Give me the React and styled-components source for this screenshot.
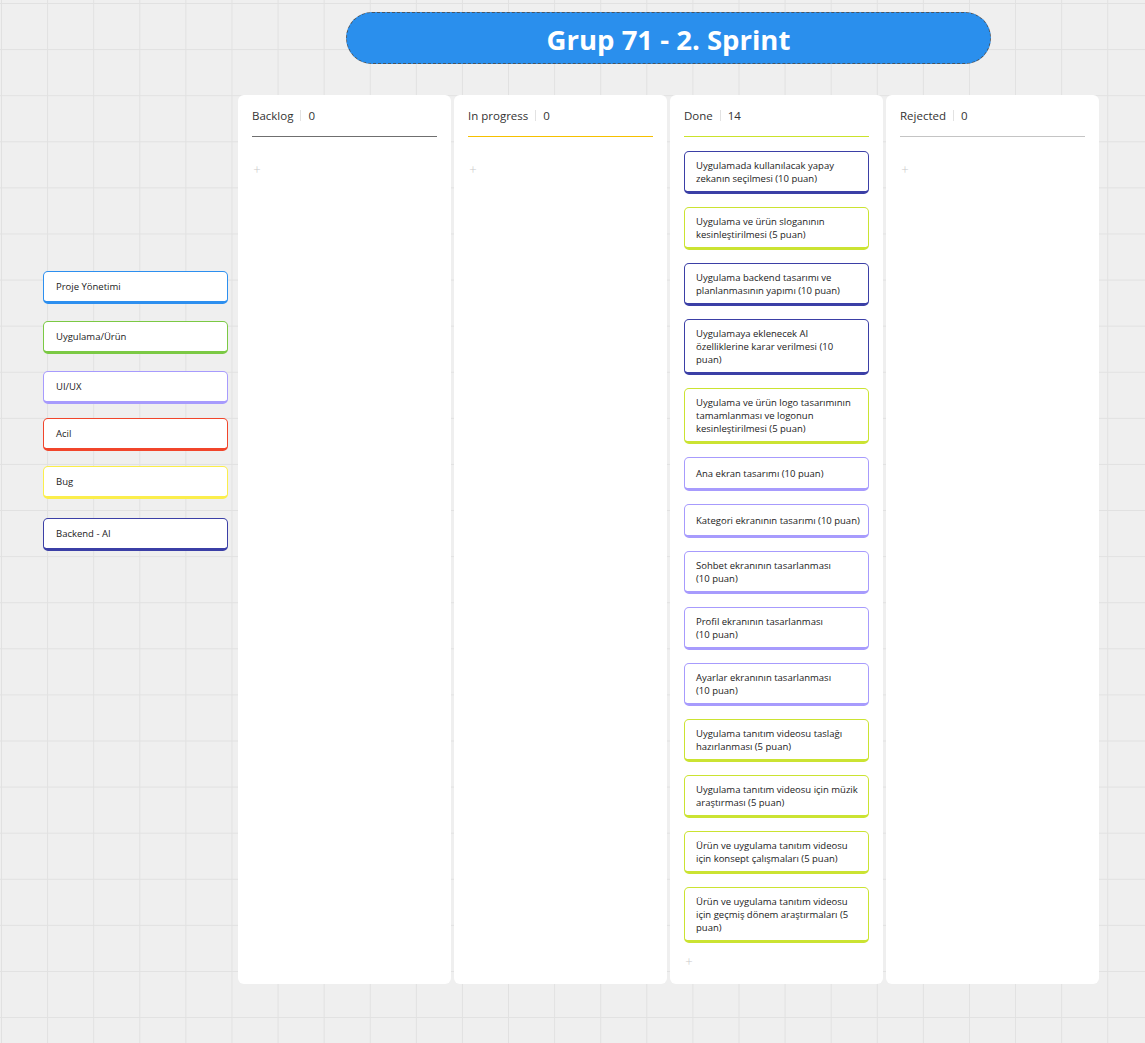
import React from "react";
import styled, { createGlobalStyle } from "styled-components";

const GlobalStyle = createGlobalStyle`
  html, body { margin: 0; padding: 0; }
  body {
    font-family: "Open Sans", "Noto Sans", "Liberation Sans", sans-serif;
    background: #efefef;
  }
`;

const COLORS = {
  blue: "#2d8fef",
  green: "#7bc944",
  purple: "#a79bfd",
  red: "#f1452b",
  yellow: "#fbee4c",
  navy: "#3b3fa6",
  lime: "#cbe332",
};

const Canvas = styled.div`
  min-height: 1043px;
  box-sizing: border-box;
  padding-top: 12px;
  background-color: #efefef;
  background-image:
    linear-gradient(to right, #e1e1e1 1px, transparent 1px),
    linear-gradient(to bottom, #e1e1e1 1px, transparent 1px);
  background-size: 46.1px 46.1px;
  background-position: 1px 3px;
`;

const TitleRow = styled.div`
  padding-left: 346px;
`;

const TitlePill = styled.div`
  width: 645px;
  height: 52px;
  box-sizing: border-box;
  border-radius: 26px;
  background: #2a8fed;
  border: 1px dashed #4a5560;
  display: flex;
  align-items: center;
  justify-content: center;
  padding-top: 2px;
  color: #fff;
  font-weight: 700;
  font-size: 27.5px;
`;

const MainRow = styled.div`
  display: flex;
  align-items: flex-start;
  margin-top: 31px;
`;

const TagList = styled.div`
  margin-left: 43px;
  margin-top: 176px;
  width: 185px;
  display: flex;
  flex-direction: column;
`;

const Tag = styled.div`
  height: 33px;
  box-sizing: border-box;
  margin-top: ${(p) => p.$offset}px;
  background: #fff;
  border: 1px solid ${(p) => p.$color};
  border-bottom-width: 3px;
  border-radius: 5px;
  display: flex;
  align-items: center;
  padding: 0 12px 1px;
  font-size: 9.5px;
  color: #222;
`;

const Board = styled.div`
  margin-left: 10px;
  display: grid;
  grid-template-columns: repeat(4, 213px);
  gap: 3px;
  align-items: stretch;
`;

const Column = styled.div`
  background: #fff;
  border-radius: 6px;
  padding: 0 14px 18px;
  min-height: 889px;
  box-sizing: border-box;
  display: flex;
  flex-direction: column;
`;

const Header = styled.div`
  display: flex;
  align-items: center;
  padding: 12px 0 12px;
  line-height: 17px;
  font-size: 11.5px;
  color: #333;
  border-bottom: 1px solid ${(p) => p.$line};
`;

const Sep = styled.span`
  width: 1px;
  height: 11px;
  background: #e2e2e2;
  margin: 0 7px 0 7px;
`;

const CardList = styled.div`
  display: flex;
  flex-direction: column;
  gap: 13px;
  padding-top: 14px;
`;

const Card = styled.div`
  box-sizing: border-box;
  min-height: 34px;
  background: #fff;
  border: 1px solid ${(p) => p.$color};
  border-bottom-width: 3px;
  border-radius: 5px;
  padding: 6.5px 12px 6.5px 11px;
  font-size: 9.5px;
  line-height: 13px;
  color: #222;
  display: flex;
  flex-direction: column;
  justify-content: center;
  white-space: nowrap;
`;

const Plus = styled.div`
  margin-top: ${(p) => (p.$empty ? 27 : 13)}px;
  color: #c9c9c9;
  font-size: 13px;
  font-weight: 300;
  line-height: 10px;
  width: 10px;
  text-align: center;
`;

const tags = [
  { label: "Proje Yönetimi", color: COLORS.blue, offset: 0 },
  { label: "Uygulama/Ürün", color: COLORS.green, offset: 17 },
  { label: "UI/UX", color: COLORS.purple, offset: 17 },
  { label: "Acil", color: COLORS.red, offset: 14 },
  { label: "Bug", color: COLORS.yellow, offset: 15 },
  { label: "Backend - AI", color: COLORS.navy, offset: 19 },
];

const doneCards = [
  { c: "navy", l: ["Uygulamada kullanılacak yapay", "zekanın seçilmesi (10 puan)"] },
  { c: "lime", l: ["Uygulama ve ürün sloganının", "kesinleştirilmesi (5 puan)"] },
  { c: "navy", l: ["Uygulama backend tasarımı ve", "planlanmasının yapımı (10 puan)"] },
  { c: "navy", l: ["Uygulamaya eklenecek AI", "özelliklerine karar verilmesi (10", "puan)"] },
  { c: "lime", l: ["Uygulama ve ürün logo tasarımının", "tamamlanması ve logonun", "kesinleştirilmesi (5 puan)"] },
  { c: "purple", l: ["Ana ekran tasarımı (10 puan)"] },
  { c: "purple", l: ["Kategori ekranının tasarımı (10 puan)"] },
  { c: "purple", l: ["Sohbet ekranının tasarlanması", "(10 puan)"] },
  { c: "purple", l: ["Profil ekranının tasarlanması", "(10 puan)"] },
  { c: "purple", l: ["Ayarlar ekranının tasarlanması", "(10 puan)"] },
  { c: "lime", l: ["Uygulama tanıtım videosu taslağı", "hazırlanması (5 puan)"] },
  { c: "lime", l: ["Uygulama tanıtım videosu için müzik", "araştırması (5 puan)"] },
  { c: "lime", l: ["Ürün ve uygulama tanıtım videosu", "için konsept çalışmaları (5 puan)"] },
  { c: "lime", l: ["Ürün ve uygulama tanıtım videosu", "için geçmiş dönem araştırmaları (5", "puan)"] },
];

const columns = [
  { title: "Backlog", line: "#6f6f6f", cards: [] },
  { title: "In progress", line: "#f6c000", cards: [] },
  { title: "Done", line: "#cbe22c", cards: doneCards },
  { title: "Rejected", line: "#c4c4c4", cards: [] },
];

export default function App() {
  return (
    <>
      <GlobalStyle />
      <Canvas>
        <TitleRow>
          <TitlePill>Grup 71 - 2. Sprint</TitlePill>
        </TitleRow>
        <MainRow>
          <TagList>
            {tags.map((t) => (
              <Tag key={t.label} $color={t.color} $offset={t.offset}>
                {t.label}
              </Tag>
            ))}
          </TagList>
          <Board>
            {columns.map((col) => (
              <Column key={col.title}>
                <Header $line={col.line}>
                  <span>{col.title}</span>
                  <Sep />
                  <span>{col.cards.length}</span>
                </Header>
                {col.cards.length > 0 && (
                  <CardList>
                    {col.cards.map((card, i) => (
                      <Card key={i} $color={COLORS[card.c]}>
                        {card.l.map((line, j) => (
                          <span key={j}>{line}</span>
                        ))}
                      </Card>
                    ))}
                  </CardList>
                )}
                <Plus $empty={col.cards.length === 0}>+</Plus>
              </Column>
            ))}
          </Board>
        </MainRow>
      </Canvas>
    </>
  );
}
